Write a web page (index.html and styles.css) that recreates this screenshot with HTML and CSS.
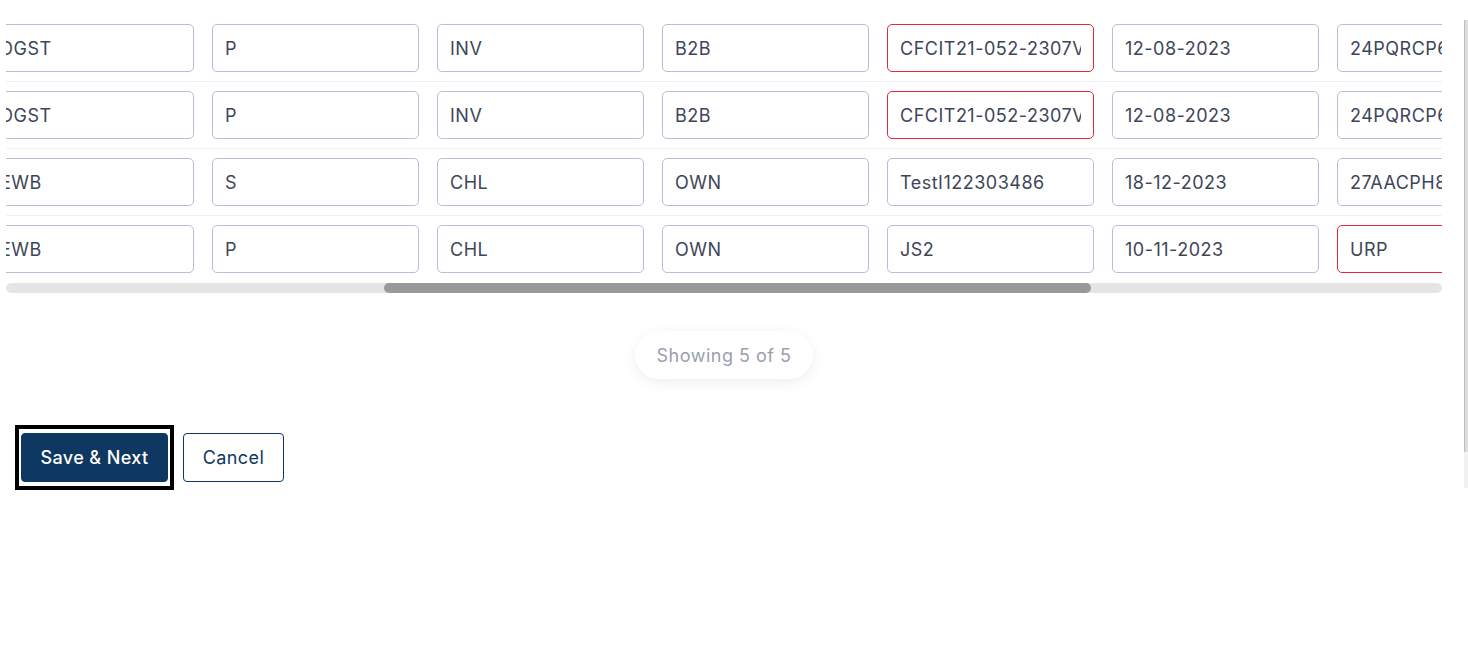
FILE: index.html
```html
<!DOCTYPE html>
<html lang="en">
<head>
<meta charset="utf-8">
<title>Records</title>
<link rel="stylesheet" href="styles.css">
</head>
<body>
<div class="page">
  <main class="main">
    <div class="table-scroll" id="tableScroll">
      <div class="table">
        <div class="row">
          <div class="cell cell-check"></div>
          <div class="cell"><input class="field" value="2023-24"></div>
          <div class="cell"><input class="field" value="Aug"></div>
          <div class="cell"><input class="field" value="Sales"></div>
          <div class="cell"><input class="field" value="DGST"></div>
          <div class="cell"><input class="field" value="P"></div>
          <div class="cell"><input class="field" value="INV"></div>
          <div class="cell"><input class="field" value="B2B"></div>
          <div class="cell"><input class="field field-error" value="CFCIT21-052-2307V01"></div>
          <div class="cell"><input class="field" value="12-08-2023"></div>
          <div class="cell"><input class="field" value="24PQRCP6789K1Z5"></div>
          <div class="cell"><input class="field" value="Rajkot Traders"></div>
          <div class="cell"><input class="field" value="24"></div>
          <div class="cell cell-action"></div>
        </div>
        <div class="row">
          <div class="cell cell-check"></div>
          <div class="cell"><input class="field" value="2023-24"></div>
          <div class="cell"><input class="field" value="Aug"></div>
          <div class="cell"><input class="field" value="Sales"></div>
          <div class="cell"><input class="field" value="DGST"></div>
          <div class="cell"><input class="field" value="P"></div>
          <div class="cell"><input class="field" value="INV"></div>
          <div class="cell"><input class="field" value="B2B"></div>
          <div class="cell"><input class="field field-error" value="CFCIT21-052-2307V02"></div>
          <div class="cell"><input class="field" value="12-08-2023"></div>
          <div class="cell"><input class="field" value="24PQRCP6789K1Z5"></div>
          <div class="cell"><input class="field" value="Rajkot Traders"></div>
          <div class="cell"><input class="field" value="24"></div>
          <div class="cell cell-action"></div>
        </div>
        <div class="row">
          <div class="cell cell-check"></div>
          <div class="cell"><input class="field" value="2023-24"></div>
          <div class="cell"><input class="field" value="Dec"></div>
          <div class="cell"><input class="field" value="Purchase"></div>
          <div class="cell"><input class="field" value="EWB"></div>
          <div class="cell"><input class="field" value="S"></div>
          <div class="cell"><input class="field" value="CHL"></div>
          <div class="cell"><input class="field" value="OWN"></div>
          <div class="cell"><input class="field" value="TestI122303486"></div>
          <div class="cell"><input class="field" value="18-12-2023"></div>
          <div class="cell"><input class="field" value="27AACPH8447G1ZP"></div>
          <div class="cell"><input class="field" value="Mumbai Logistics"></div>
          <div class="cell"><input class="field" value="27"></div>
          <div class="cell cell-action"></div>
        </div>
        <div class="row">
          <div class="cell cell-check"></div>
          <div class="cell"><input class="field" value="2023-24"></div>
          <div class="cell"><input class="field" value="Nov"></div>
          <div class="cell"><input class="field" value="Purchase"></div>
          <div class="cell"><input class="field" value="EWB"></div>
          <div class="cell"><input class="field" value="P"></div>
          <div class="cell"><input class="field" value="CHL"></div>
          <div class="cell"><input class="field" value="OWN"></div>
          <div class="cell"><input class="field" value="JS2"></div>
          <div class="cell"><input class="field" value="10-11-2023"></div>
          <div class="cell"><input class="field field-error" value="URP"></div>
          <div class="cell"><input class="field" value="Unregistered"></div>
          <div class="cell"><input class="field" value="29"></div>
          <div class="cell cell-action"></div>
        </div>
      </div>
    </div>
    <div class="hscroll"><div class="hscroll-thumb" style="margin-left: 378px; width: 707px;"></div></div>

    <div class="count-wrap">
      <div class="count-pill">Showing 5 of 5</div>
    </div>

    <div class="actions">
      <span class="focus-ring"><button class="btn btn-primary" type="button">Save &amp; Next</button></span>
      <button class="btn btn-outline" type="button">Cancel</button>
    </div>
  </main>
  <div class="rail"><div class="rail-thumb"></div></div>
</div>
<script src="script.js"></script>
</body>
</html>
```

FILE: styles.css
```css
* { box-sizing: border-box; }

html, body {
  margin: 0;
  padding: 0;
  background: #ffffff;
  overflow: hidden;
}

body {
  font-family: Inter, "Noto Sans", "Liberation Sans", sans-serif;
  color: #3e4558;
}

.page {
  display: flex;
  width: 1468px;
  height: 648px;
}

.main {
  flex: 1;
  min-width: 0;
  padding: 15px 22px 0 6px;
}

.table-scroll {
  width: 1436px;
  overflow: hidden;
}

.table {
  width: 2917px;
  display: flex;
  flex-direction: column;
}

.row {
  display: flex;
  padding: 9px 0;
  border-bottom: 1px solid #eef0f3;
}
.row:last-child {
  border-bottom: none;
  padding-bottom: 10px;
}

.cell {
  flex: 0 0 225px;
  padding: 0 9px;
}
.cell-check { flex-basis: 65px; padding: 0; }
.cell-action { flex-basis: 152px; padding: 0; }

.field {
  display: block;
  width: 207px;
  height: 48px;
  padding: 0 12px;
  border: 1px solid #b6bfd6;
  border-radius: 5px;
  background: #ffffff;
  font-family: inherit;
  font-size: 18px;
  letter-spacing: 0.5px;
  color: #3e4558;
  outline: none;
}
.field-error {
  border-color: #dc2a3f;
}

.hscroll {
  width: 1436px;
  height: 10px;
  border-radius: 5px;
  background: #e5e5e5;
}
.hscroll-thumb {
  height: 10px;
  border-radius: 5px;
  background: #999999;
}

.count-wrap {
  width: 1436px;
  display: flex;
  justify-content: center;
  padding-top: 38px;
}

.count-pill {
  height: 48px;
  padding: 0 22px;
  display: flex;
  align-items: center;
  border-radius: 24px;
  background: #ffffff;
  box-shadow: 0 3px 12px rgba(110, 120, 170, 0.13);
  font-size: 18px;
  letter-spacing: 0.5px;
  color: #9aa0ad;
}

.actions {
  display: flex;
  align-items: center;
  gap: 9px;
  padding: 46px 0 0 9px;
}

.focus-ring {
  display: inline-flex;
  border: 4px solid #000000;
  padding: 4px 2px;
}

.btn {
  height: 49px;
  border-radius: 4px;
  font-family: inherit;
  font-size: 18px;
  letter-spacing: 0.4px;
  cursor: pointer;
}

.btn-primary {
  width: 147px;
  background: #0e3761;
  border: 1px solid #0e3761;
  color: #ffffff;
  font-weight: 500;
}

.btn-outline {
  width: 101px;
  background: #ffffff;
  border: 1px solid #0e3761;
  color: #0e3761;
}

.rail {
  flex: 0 0 4px;
  margin-top: 20px;
  height: 468px;
  background: #f1f1f1;
}
.rail-thumb {
  height: 432px;
  background: #dedede;
  border-left: 1px solid #bcbcbc;
}
```

FILE: script.js
```js
document.getElementById('tableScroll').scrollLeft = 768;
```
